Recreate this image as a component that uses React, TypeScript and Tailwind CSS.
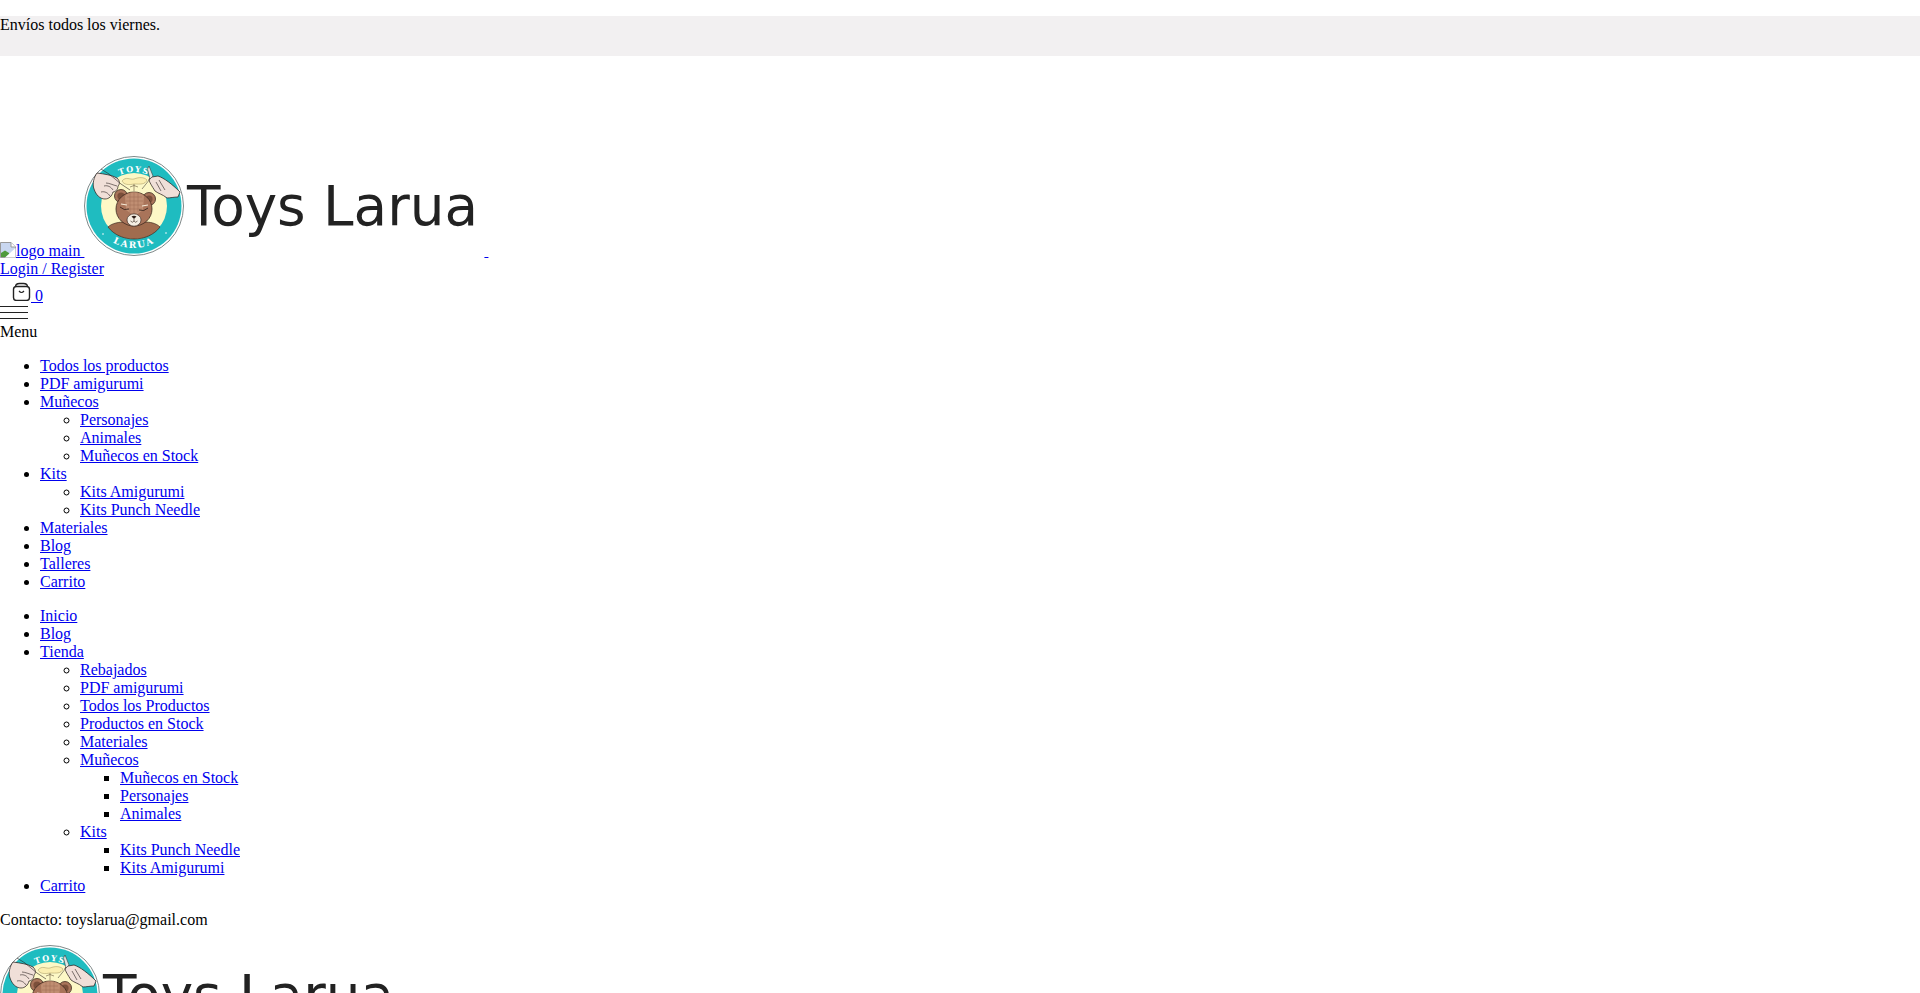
function Logo({ className = "" }: { className?: string }) {
  return (
    <svg viewBox="0 0 400 100" className={`inline-block align-baseline w-[400px] h-[100px] ${className}`}>
      <defs>
        <path id="arcTop" d="M 16 50 A 34 34 0 0 1 84 50" />
        <path id="arcBot" d="M 8 50 A 42 42 0 0 0 92 50" />
      </defs>
      <circle cx="50" cy="50" r="49.5" fill="#ffffff" stroke="#6f7a7a" strokeWidth="0.9" />
      <circle cx="50" cy="50" r="47.5" fill="#1fbcc0" />
      <circle cx="50" cy="50" r="33" fill="#fdf8c6" />
      <path d="M24 71 C28 67 36 66 40 66 L60 66 C66 66 72 67 76 71 C70 79 60 83 50 83 C40 83 30 79 24 71 Z" fill="#a06c4e" stroke="#3d2a20" strokeWidth="0.7" />
      <text fontFamily="'DejaVu Serif', serif" fontWeight="700" fontSize="8" fill="#ffffff" letterSpacing="1.4">
        <textPath href="#arcTop" startOffset="50%" textAnchor="middle">TOYS</textPath>
      </text>
      <text fontFamily="'DejaVu Serif', serif" fontWeight="700" fontSize="9" fill="#ffffff" letterSpacing="1.8">
        <textPath href="#arcBot" startOffset="50%" textAnchor="middle">LARUA</textPath>
      </text>
      <circle cx="19" cy="78" r="0.8" fill="#fff" />
      <circle cx="82" cy="77" r="0.8" fill="#fff" />
      <circle cx="37" cy="40" r="6.5" fill="#a9745a" stroke="#3d2a20" strokeWidth="0.8" />
      <circle cx="37" cy="40" r="3.6" fill="#7b4f3a" />
      <circle cx="65" cy="43" r="6.5" fill="#a9745a" stroke="#3d2a20" strokeWidth="0.8" />
      <circle cx="65" cy="43" r="3.6" fill="#7b4f3a" />
      <ellipse cx="50" cy="53" rx="18" ry="17" fill="#a9745a" stroke="#3d2a20" strokeWidth="0.8" />
      <path d="M41 40 C45 35 55 35 60 40 L59 54 L51 60 L42 54 Z" fill="#c08e72" />
      <path d="M43 41 L58 41 M42 45 L59 45 M42 49 L59 49 M43 53 L58 53 M46 37 L46 56 M50 36 L50 59 M54 37 L54 56" stroke="#9a6a50" strokeWidth="0.45" />
      <path d="M36 51 Q40 55 45 53" fill="none" stroke="#2c1d16" strokeWidth="0.8" />
      <path d="M55 54 Q60 56 64 52" fill="none" stroke="#2c1d16" strokeWidth="0.8" />
      <path d="M37 48 L43 49 M58 50 L64 49" stroke="#f5ead8" strokeWidth="1.1" />
      <ellipse cx="50" cy="64" rx="7" ry="6.2" fill="#f4eee2" stroke="#3d2a20" strokeWidth="0.7" />
      <path d="M47.5 60.5 Q50 59 52.5 60.5 L50 63 Z" fill="#2c1d16" />
      <path d="M50 63 L50 65 M46.5 65 Q48.5 67.5 50 65 Q51.5 67.5 53.5 65" fill="none" stroke="#2c1d16" strokeWidth="0.6" />
      <path d="M38 25 C42 20 46 24 50 23 C55 21 60 21 63 24 C61 29 56 28 50 28 C45 29 40 29 38 25 Z" fill="#fbeeb0" stroke="#8a7a45" strokeWidth="0.4" />
      <path d="M50 28 L50 35 M46 31 Q50 28 54 31" fill="none" stroke="#4d3a22" strokeWidth="0.5" />
      <path d="M13 17 C20 18 28 19 33 22 C36 25 36 28 34 30 C34 33 32 36 29 36 C28 40 25 43 21 43 C16 43 12 39 10 33 C8 28 10 21 13 17 Z" fill="#f0dfd8" stroke="#2a2220" strokeWidth="0.75" />
      <path d="M33 30 C29 29 25 27 22 27 M20 30 C24 29 27 31 29 34 M17 36 C21 35 24 37 26 40" fill="none" stroke="#2a2220" strokeWidth="0.6" />
      <path d="M17 13 L25 18 L37 28 L46 34" fill="none" stroke="#2a2220" strokeWidth="0.6" />
      <path d="M68 21 L74 20 C80 22 88 28 96 36 L94 41 C90 41 86 42 83 42 C78 38 75 38 71 35 C68 30 65 26 65 23 Z" fill="#f0dfd8" stroke="#2a2220" strokeWidth="0.75" />
      <path d="M72 26 L77 35 M75 24 L81 34" fill="none" stroke="#2a2220" strokeWidth="0.6" />
      <path d="M65 10 L69 20 L66 23 L63.5 13 Z" fill="#dde5e2" stroke="#2a2220" strokeWidth="0.5" />
      <path d="M66 23 L58 33" fill="none" stroke="#2a2220" strokeWidth="0.5" />
      <text x="103" y="69" fontFamily="'DejaVu Sans', sans-serif" fontSize="54.8" fill="#222222">Toys Larua</text>
    </svg>
  );
}

function BrokenImage() {
  return (
    <svg viewBox="0 0 16 16" className="inline-block align-[-2px] w-4 h-4">
      <path d="M0.5 0.5 H11 L15.5 5 V15.5 H0.5 Z" fill="#c9d7f0" stroke="#9a9a9a" />
      <path d="M11 0.5 V5 H15.5" fill="#ffffff" stroke="#9a9a9a" />
      <path d="M1 15 V11 L5 8.5 L9 11 L11 15 Z" fill="#4f9a3c" />
      <path d="M5 15.5 L15.5 6 V15.5 Z" fill="#ffffff" />
    </svg>
  );
}

function CartIcon() {
  return (
    <svg viewBox="0 0 31 23" className="inline-block align-baseline w-[31px] h-[23px]" fill="none" stroke="#222222">
      <rect x="13.5" y="8.5" width="16" height="14" rx="3" strokeWidth="1.4" />
      <path d="M15.5 9 C15.5 6.5 17 5.5 19.5 5.5 H23.5 C26 5.5 27.5 6.5 27.5 9" strokeWidth="1.3" />
      <path d="M19 13 Q21.5 16 24 13" strokeWidth="1.2" />
    </svg>
  );
}

type Item = { label: string; children?: Item[] };

const mobileMenu: Item[] = [
  { label: "Todos los productos" },
  { label: "PDF amigurumi" },
  {
    label: "Muñecos",
    children: [{ label: "Personajes" }, { label: "Animales" }, { label: "Muñecos en Stock" }],
  },
  { label: "Kits", children: [{ label: "Kits Amigurumi" }, { label: "Kits Punch Needle" }] },
  { label: "Materiales" },
  { label: "Blog" },
  { label: "Talleres" },
  { label: "Carrito" },
];

const mainMenu: Item[] = [
  { label: "Inicio" },
  { label: "Blog" },
  {
    label: "Tienda",
    children: [
      { label: "Rebajados" },
      { label: "PDF amigurumi" },
      { label: "Todos los Productos" },
      { label: "Productos en Stock" },
      { label: "Materiales" },
      {
        label: "Muñecos",
        children: [{ label: "Muñecos en Stock" }, { label: "Personajes" }, { label: "Animales" }],
      },
      { label: "Kits", children: [{ label: "Kits Punch Needle" }, { label: "Kits Amigurumi" }] },
    ],
  },
  { label: "Carrito" },
];

function Menu({ items, depth = 0 }: { items: Item[]; depth?: number }) {
  const cls =
    depth === 0
      ? "list-disc pl-10 my-4"
      : depth === 1
        ? "list-[circle] pl-10"
        : "list-[square] pl-10";
  return (
    <ul className={cls}>
      {items.map((item) => (
        <li key={item.label}>
          <a href="#" className="underline text-[#0000ee]">{item.label}</a>
          {item.children && <Menu items={item.children} depth={depth + 1} />}
        </li>
      ))}
    </ul>
  );
}

export default function App() {
  return (
    <div className="h-[993px] overflow-hidden bg-white text-black font-['Liberation_Serif',serif] text-base leading-[normal]">
      <div className="h-4" />
      <div className="h-10 bg-[#f2f0f1]">Envíos todos los viernes.</div>
      <div>
        <a href="#" className="underline text-[#0000ee]">
          <BrokenImage />
          logo main <Logo className="mt-[100px]" />
          {"\u00a0"}
        </a>
      </div>
      <div>
        <a href="#" className="underline text-[#0000ee]">Login / Register</a>
      </div>
      <div>
        <a href="#" className="underline text-[#0000ee]">
          <CartIcon /> 0
        </a>
      </div>
      <div className="flex flex-col gap-[5px] w-7 pt-px pb-1">
        <span className="h-px bg-[#222222]" />
        <span className="h-px bg-[#222222]" />
        <span className="h-px bg-[#222222]" />
      </div>
      <div>Menu</div>
      <Menu items={mobileMenu} />
      <Menu items={mainMenu} />
      <p className="my-4">Contacto: toyslarua@gmail.com</p>
      <div>
        <Logo />
      </div>
    </div>
  );
}
